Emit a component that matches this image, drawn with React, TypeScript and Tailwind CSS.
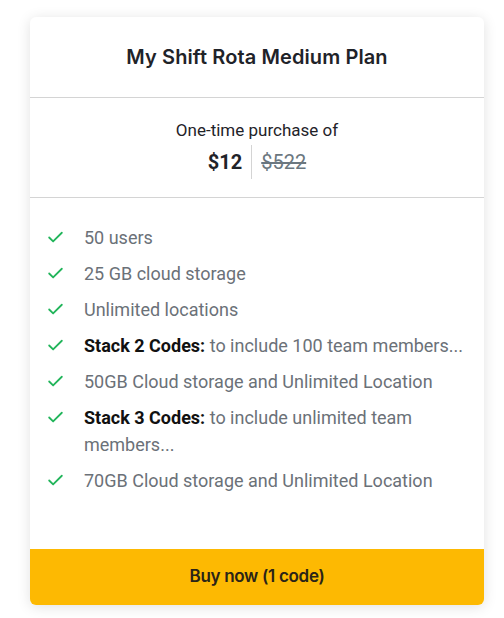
import { Check } from 'lucide-react'

const features: { bold?: string; text: string }[] = [
  { text: '50 users' },
  { text: '25 GB cloud storage' },
  { text: 'Unlimited locations' },
  { bold: 'Stack 2 Codes:', text: 'to include 100 team members...' },
  { text: '50GB Cloud storage and Unlimited Location' },
  { bold: 'Stack 3 Codes:', text: 'to include unlimited team members...' },
  { text: '70GB Cloud storage and Unlimited Location' },
]

const App = () => {
  return (
    <div className="min-h-[618px] bg-white pt-[17px] pl-[30px] font-['Roboto',sans-serif]">
      <div className="w-[454px] bg-white rounded-md shadow-[0_2px_14px_rgba(0,0,0,0.12)] flex flex-col">
        {/* Header */}
        <div className="h-[81px] flex items-center justify-center border-b border-[#d4d4d4]">
          <h1 className="text-[20px] font-semibold text-[#1f2329] font-['Inter',sans-serif] tracking-[0.1px]">
            My Shift Rota Medium Plan
          </h1>
        </div>

        {/* Price */}
        <div className="h-[100px] flex flex-col items-center justify-center border-b border-[#d4d4d4] pt-[2px]">
          <p className="text-[17px] text-[#1f2329] leading-[22px]">One-time purchase of</p>
          <div className="flex items-stretch mt-[4px]">
            <span className="text-[20px] font-bold text-[#1f2329] pr-[9px] leading-[34px]">$12</span>
            <span className="w-px bg-[#d4d4d4]"></span>
            <span className="text-[20px] text-[#6b7780] line-through pl-[9px] leading-[34px]">$522</span>
          </div>
        </div>

        {/* Features */}
        <ul className="flex flex-col gap-[9px] pt-[26px] pb-[55px] pl-[16px] pr-[16px]">
          {features.map((f, i) => (
            <li key={i} className="flex items-start text-[18px] leading-[27px] text-[#6b7178]">
              <Check className="w-[19px] h-[19px] text-[#22b55b] mt-[4px] shrink-0" strokeWidth={2.25} />
              <span className="ml-[19px]">
                {f.bold && <b className="text-[#111] font-bold">{f.bold} </b>}
                {f.text}
              </span>
            </li>
          ))}
        </ul>

        {/* Button */}
        <button className="h-[56px] w-full bg-[#fdb902] rounded-b-md text-[17px] font-semibold text-[#2a2418] font-['Inter',sans-serif] tracking-[-0.3px]">
          Buy now (1 code)
        </button>
      </div>
    </div>
  )
}

export default App
